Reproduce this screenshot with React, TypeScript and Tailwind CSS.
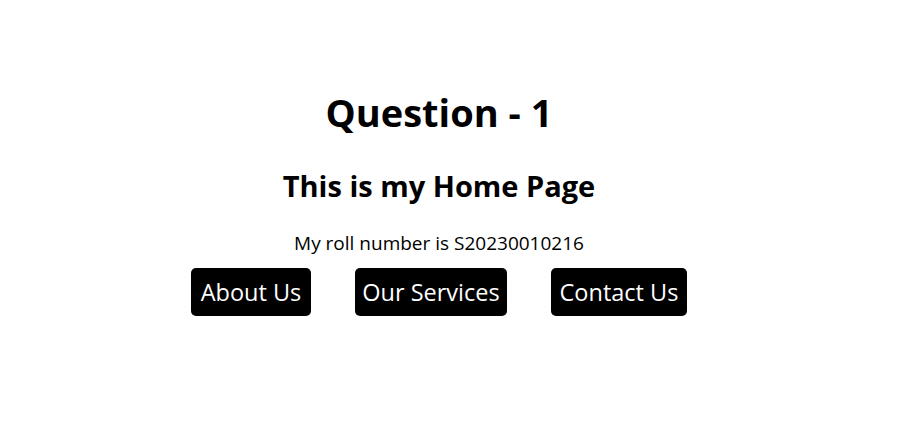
export default function App() {
  const btn = "bg-black text-white text-[23.5px] leading-[32px] h-[48px] flex items-center justify-center rounded-[5px]";
  return (
    <div className="w-[899px] h-[437px] bg-white text-black pr-[21px] flex flex-col items-center" style={{ fontFamily: '"Open Sans", "Noto Sans", sans-serif' }}>
      <h1 className="mt-[90px] text-[38px] leading-[44px] font-bold">Question - 1</h1>
      <h2 className="mt-[35px] text-[29px] leading-[34px] font-bold">This is my Home Page</h2>
      <p className="mt-[28px] text-[19px] leading-[24px]">My roll number is S20230010216</p>
      <div className="mt-[13px] flex gap-[44px]">
        <button className={`${btn} w-[120px]`}>About Us</button>
        <button className={`${btn} w-[152px]`}>Our Services</button>
        <button className={`${btn} w-[136px]`}>Contact Us</button>
      </div>
    </div>
  );
}
